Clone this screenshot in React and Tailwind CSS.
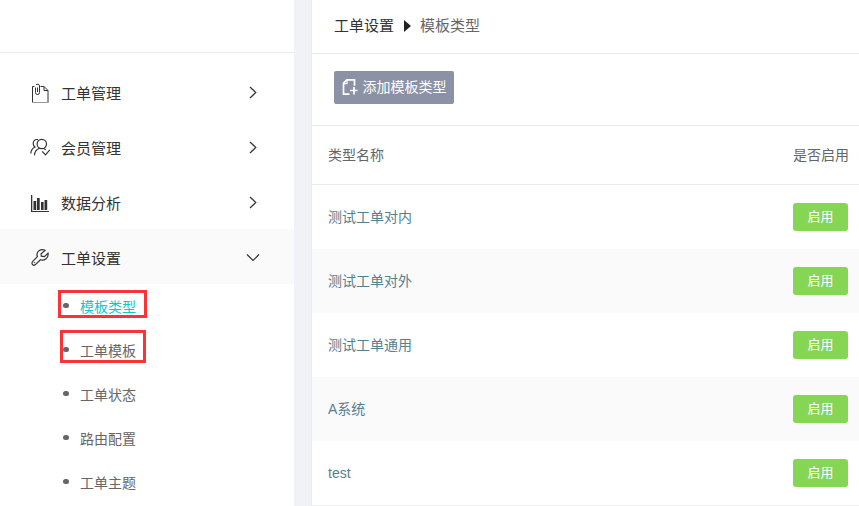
import React from "react";

const iconProps = {
  width: 20,
  height: 20,
  viewBox: "0 0 20 20",
  fill: "none",
  stroke: "currentColor",
  strokeWidth: 1.2,
  "aria-hidden": true,
};

function TicketIcon() {
  return (
    <svg {...iconProps} strokeWidth="1">
      <path d="M4.500 3.500h-2v16M10.500 3.500h3.500l4 4v12" />
      <path d="M2 19.500h16.500" stroke="#999" />
      <path d="M14 3.500V7.500H18" />
      <path d="M5.500 4.500V9.500a2 2 0 0 0 4 0V3a1.900 1.900 0 0 0-3.500-1M7.500 4.500V9" />
    </svg>
  );
}

function MembersIcon() {
  return (
    <svg {...iconProps}>
      <circle cx="11.800" cy="6" r="4.700" />
      <path d="M8 1.700C5 .9 3.200 3 3.200 5.400c0 1.500.7 2.900 1.800 3.600C2.200 10.500.9 12.800.8 15.500" />
      <path d="M9.500 10.200c-3.100 1.100-4.900 3.600-5 7M13.500 10.500c1 .3 1.600.7 2.200 1.200" />
      <path d="M12.200 13.300l3.300 3.500 4.300-5" />
    </svg>
  );
}

function ChartIcon() {
  return (
    <svg {...iconProps} fill="currentColor" stroke="none">
      <path d="M1 2h1.300v16H19v1H1zM3.500 8h2.700v9H3.500zM7 5h2.700v12H7zM11 9h2.600v8H11zM14.500 7h2.700v10h-2.700z" />
    </svg>
  );
}

function WrenchIcon() {
  return (
    <svg {...iconProps}>
      <path d="M15 2.400C11 .4 6.500 3 7 7.200c.1.500.2 1 .4 1.500L3 13.200c-1.100 1.200-1.200 2.600-.4 3.400.9.900 2.300.7 3.400-.4l4.400-4.400c4 1.400 8.500-2 7.600-6.600L14.500 8.700l-3.200-.5-.2-2.400z" />
      <path d="M4.600 14.600h.1" strokeLinecap="round" />
    </svg>
  );
}

function Chevron({ open }) {
  return (
    <svg width="14" height="14" viewBox="0 0 14 14" fill="none" stroke="currentColor" strokeWidth="1.200" aria-hidden="true">
      <path d={open ? "M1 3.500l6 6 6-6" : "M4 1L9.800 6.500 4 12"} />
    </svg>
  );
}

function AddFileIcon() {
  return (
    <svg width="16" height="18" viewBox="0 0 16 18" fill="none" stroke="currentColor" strokeWidth="1.700" aria-hidden="true">
      <path d="M7.500 16.200H1.500V5.200L4.800 1.800h7.700v6" />
      <path d="M1.500 5.700H5V2" strokeWidth="1.200" />
      <path d="M8 12.500h7.500M12 9v7.500" />
    </svg>
  );
}

const menu = [
  { label: "工单管理", Icon: TicketIcon },
  { label: "会员管理", Icon: MembersIcon },
  { label: "数据分析", Icon: ChartIcon },
  { label: "工单设置", Icon: WrenchIcon, open: true },
];

const submenu = [
  { label: "模板类型", active: true, mark: "-left-[5px] top-[6px] h-7 w-[89px]" },
  { label: "工单模板", mark: "-left-[3px] top-[2px] h-[33px] w-[86px]" },
  { label: "工单状态" },
  { label: "路由配置" },
  { label: "工单主题" },
];

const types = ["测试工单对内", "测试工单对外", "测试工单通用", "A系统", "test"];

function Sidebar() {
  return (
    <aside className="w-[294px] shrink-0 bg-white text-[#333]">
      <div className="h-[53px] border-b border-[#ebebeb]" />
      <nav className="pt-[11px]">
        {menu.map(({ label, Icon, open }) => (
          <button
            key={label}
            type="button"
            aria-expanded={!!open}
            className={`flex h-[55px] w-full items-center pt-[2px] pr-[34px] pl-[30px] text-[15px] ${open ? "bg-[#fafafa]" : ""}`}
          >
            <Icon />
            <span className="flex-1 pt-1 pl-[11px] text-left">{label}</span>
            <Chevron open={open} />
          </button>
        ))}
        <ul className="pl-[63px] text-sm text-[#666]">
          {submenu.map(({ label, active, mark }) => (
            <li key={label} className="relative flex h-11 items-center pb-[2px]">
              <span className="h-[5px] w-[6px] rounded-full bg-[#666]" />
              <a href="#" className={`pt-1 pl-[11px] ${active ? "text-[#13c5cc]" : ""}`}>
                {label}
              </a>
              {mark && <span className={`pointer-events-none absolute border-3 border-[#f93439] ${mark}`} />}
            </li>
          ))}
        </ul>
      </nav>
    </aside>
  );
}

export default function App() {
  return (
    <div className="flex h-screen overflow-hidden bg-[#f0f2f8] font-['Liberation_Sans','Noto_Sans_CJK_SC',sans-serif]">
      <Sidebar />
      <main className="ml-[17px] min-w-0 flex-1 border-l border-[#ebebeb] bg-white">
        <div className="flex h-[54px] items-center gap-[9px] border-b border-[#e8e8e8] pl-[22px] text-[15px]">
          <a href="#" className="text-[#333]">工单设置</a>
          <svg width="8" height="12" viewBox="0 0 8 12" fill="#222" aria-hidden="true" className="mb-[2px]">
            <path d="M1 0l7 6-7 6z" />
          </svg>
          <span className="text-[#666]">模板类型</span>
        </div>
        <div className="flex h-[72px] items-center border-b border-[#e8e8e8] pl-[22px]">
          <button type="button" className="mb-1 flex h-[33px] w-[120px] items-center justify-center gap-[5px] rounded-xs bg-[#8c92a5] pb-[2px] text-sm whitespace-nowrap text-white">
            <AddFileIcon />
            添加模板类型
          </button>
        </div>
        <table className="w-full border-separate border-spacing-0 border-b border-[#f0f0f0] text-sm">
          <thead>
            <tr className="h-[59px] text-[#666]">
              <th className="border-b border-[#ebebeb] pl-4 text-left font-normal">类型名称</th>
              <th className="w-[78px] border-b border-[#ebebeb] pr-[10px] text-right font-normal">是否启用</th>
            </tr>
          </thead>
          <tbody>
            {types.map((name) => (
              <tr key={name} className="h-16 text-[#56808f] even:bg-[#fafafa]">
                <td className="pl-4">{name}</td>
                <td className="pr-[11px]">
                  <button type="button" className="ml-auto block h-7 w-[55px] rounded-[3px] bg-[#86d656] text-[13px] text-white">
                    启用
                  </button>
                </td>
              </tr>
            ))}
          </tbody>
        </table>
      </main>
    </div>
  );
}
